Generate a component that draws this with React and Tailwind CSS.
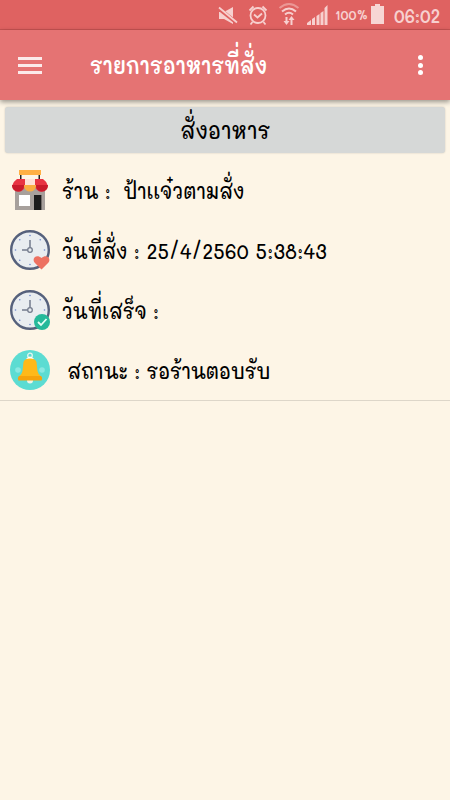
import clsx from "clsx";

function StatusBar() {
  return (
    <div className="flex h-[30px] items-center border-b border-[#c85352] bg-[#df6261] text-[#f7d0cf]">
      <svg width="120" height="29" viewBox="210 0 120 29" className="ml-[210px] shrink-0" fill="none">
        <path d="M219 12h5l9-5v17l-9-5h-5z" fill="#f7d0cf" />
        <path d="M218 8l19 15" stroke="#df6261" strokeWidth="4" />
        <path d="M219 7.500l18 15" stroke="#f7d0cf" strokeWidth="1.800" />
        <circle cx="258" cy="15.500" r="7.500" stroke="#f7d0cf" strokeWidth="1.800" />
        <path d="M254 14.500l3.500 3 4.500-4M249.500 10.500l4-4M266.500 10.500l-4-4M252.500 22l-2 2.500M263.500 22l2 2.500" stroke="#f7d0cf" strokeWidth="1.800" />
        <path d="M279.500 8q9.500-8 19 0" stroke="#eb9795" strokeWidth="2" />
        <path d="M282 11.500q7-6 14 0M285 14.500q4-3.500 8 0" stroke="#f7d0cf" strokeWidth="2" />
        <path d="M286.500 17v6M291.500 25v-6" stroke="#f7d0cf" strokeWidth="2" />
        <path d="M283.500 21h6l-3 4zM288.500 20h6l-3-4z" fill="#f7d0cf" />
        <path d="M307 25v-2l4-3v5zM312 25v-6l3-2v8zM316.500 25v-9l3-2v11zM320.500 25v-12l3-2v14zM324.500 25v-17l3-3v20z" fill="#f7d0cf" />
      </svg>
      <span className="ml-[5px] w-[34px] origin-left scale-x-[0.9] whitespace-nowrap text-[14px] font-semibold leading-none">100%</span>
      <svg width="13" height="20" viewBox="0 0 13 20" className="ml-[2px] -mt-[1px] shrink-0" fill="#f7d6d4">
        <path d="M4 0h5v2h4v18H0V2h4z" />
      </svg>
      <span className="ml-[10px] origin-left scale-x-[0.84] whitespace-nowrap text-[20px] font-semibold leading-none">06:02</span>
    </div>
  );
}

function AppBar() {
  return (
    <div className="relative flex h-[70px] items-center bg-[#e57373] text-white shadow-[0_2px_5px_rgba(0,0,0,0.4)]">
      <div className="ml-[18px] flex w-[24px] flex-col gap-[4px]">
        <span className="h-[3px] bg-[#fbeaea]" />
        <span className="h-[3px] bg-[#fbeaea]" />
        <span className="h-[3px] bg-[#fbeaea]" />
      </div>
      <h1 className="ml-[48px] origin-left scale-x-[0.84] whitespace-nowrap text-[24px] font-semibold leading-[30px]">รายการอาหารที่สั่ง</h1>
      <div className="ml-auto mr-[27px] flex flex-col gap-[2.500px]">
        <span className="size-[5px] rounded-full bg-white" />
        <span className="size-[5px] rounded-full bg-white" />
        <span className="size-[5px] rounded-full bg-white" />
      </div>
    </div>
  );
}

function ShopIcon() {
  return (
    <svg width="40" height="40" viewBox="0 0 40 40">
      <path d="M10 5h1.500v6H10zM28.500 5H30v6h-1.500z" fill="#222" />
      <path d="M5 17h30v23H5z" fill="#a7a09c" />
      <path d="M9 0h22v5H9z" fill="#ffb044" />
      <path d="M13 9h14v7H13z" fill="#ffe2d8" />
      <path d="M7 9h8v6a5.500 6 0 0 1-12.500 0Q4 11 7 9z" fill="#e83443" />
      <path d="M33 9h-8v6a5.500 6 0 0 0 12.500 0Q36 11 33 9z" fill="#e83443" />
      <path d="M2 15h12v1a6 5.500 0 0 1-12 0zM26 15h12v1a6 5.500 0 0 1-12 0z" fill="#ca1b2c" />
      <path d="M14 15h12v1a6 5.500 0 0 1-12 0z" fill="#f9ad42" />
      <path d="M9 25h11v11H9z" fill="#fff" />
      <path d="M24 25h7v15h-7z" fill="#1c1c1c" />
      <path d="M31 25h1v15h-1z" fill="#716c69" />
    </svg>
  );
}

function ClockIcon({ badge }) {
  return (
    <svg width="40" height="40" viewBox="0 0 40 40" fill="none">
      <circle cx="20" cy="20" r="18.800" fill="#e9edf0" stroke="#56617c" strokeWidth="2.400" />
      <g fill="#7188cc">
        {[0, 45, 90, 135, 180, 225, 270, 315].map((angle) => (
          <circle key={angle} cx="20" cy="5.500" r=".8" transform={`rotate(${angle} 20 20)`} />
        ))}
      </g>
      <path d="M20 10v7.500M12 20h5.500" stroke="#737b8c" strokeWidth="1.500" />
      <circle cx="20" cy="20" r="2.300" stroke="#737b8c" strokeWidth="1.300" />
      {badge === "heart" && (
        <path d="M31.500 39.500l-7-7c-3-4 2-9 7-4.500 5-4.500 10 .5 7 4.500z" fill="#ed7161" />
      )}
      {badge === "check" && (
        <>
          <circle cx="32" cy="32" r="8" fill="#25b99a" />
          <path d="M28 32l3 3 5.500-6" stroke="#e5fff5" strokeWidth="1.800" />
        </>
      )}
    </svg>
  );
}

function BellIcon() {
  return (
    <svg width="40" height="40" viewBox="0 0 40 40" fill="none">
      <circle cx="20" cy="20" r="20" fill="#5cdcd2" />
      <circle cx="8" cy="20" r="2.800" fill="#8ae8e1" />
      <circle cx="32" cy="20" r="2.800" fill="#8ae8e1" />
      <circle cx="20" cy="5.500" r="2.300" stroke="#e4f6ef" strokeWidth="1.300" />
      <circle cx="20" cy="30.500" r="3" fill="#f0f3e7" />
      <path d="M16 9q4-5 8 0z" fill="#fff" />
      <path d="M13.500 12q1-3.500 6.500-3.500t6.500 3.500l1 9q.5 3 3.500 5.500H9q3-2.500 3.500-5.500z" fill="#ffb919" />
      <path d="M9 26h22q2 2 .5 4.500h-23Q7 28 9 26z" fill="#f6a30c" />
    </svg>
  );
}

function Row({ icon, label, value, className, valueClassName }) {
  return (
    <div className="flex h-[60px] items-center pl-[10px]">
      <div className="shrink-0">{icon}</div>
      <p className={clsx("ml-[12px] origin-left scale-x-[0.86] whitespace-pre pt-[2px] text-[22px] font-medium leading-[30px]", className)}>
        {label}
        <span className={valueClassName}>{value}</span>
      </p>
    </div>
  );
}

export default function App() {
  return (
    <div className="h-[800px] w-[450px] overflow-hidden bg-[#fdf5e6] font-['Mali','Noto_Sans_Thai','Noto_Sans',sans-serif] text-black">
      <StatusBar />
      <AppBar />
      <div className="px-[5px] pt-[7px]">
        <button className="flex h-[46px] w-full items-center justify-center rounded-[3px] bg-[#d6d8d7] text-[24px] font-medium shadow-[0_0_2px_rgba(0,0,0,0.2)]">
          <span className="scale-x-[0.86]">สั่งอาหาร</span>
        </button>
      </div>
      <div className="border-b border-[#ddd6c9] pt-[7px]">
        <Row icon={<ShopIcon />} label="ร้าน :  " value="ป้าเเจ๋วตามสั่ง" />
        <Row icon={<ClockIcon badge="heart" />} label="วันที่สั่ง : " value="25/4/2560 5:38:43" valueClassName="pl-[1px] tracking-[0.5px]" />
        <Row icon={<ClockIcon badge="check" />} label="วันที่เสร็จ :" />
        <Row icon={<BellIcon />} label="สถานะ : " value="รอร้านตอบรับ" className="pl-[6px]" valueClassName="tracking-[-0.3px]" />
      </div>
    </div>
  );
}
